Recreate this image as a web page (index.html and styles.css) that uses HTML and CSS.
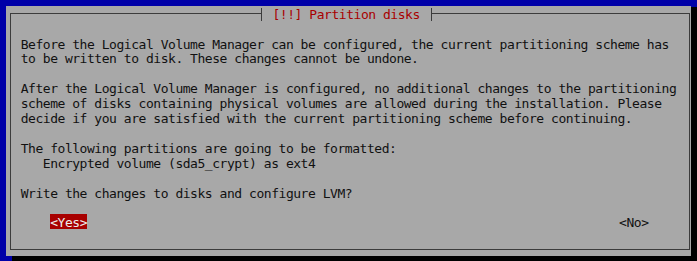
FILE: index.html
```html
<!DOCTYPE html>
<html>
<head>
<meta charset="utf-8">
<link rel="stylesheet" href="styles.css">
</head>
<body>
<div class="screen">
  <div class="dialog">
    <div class="frame">
      <div class="title">[!!] Partition disks</div>
      <div class="body">Before the Logical Volume Manager can be configured, the current partitioning scheme has
to be written to disk. These changes cannot be undone.

After the Logical Volume Manager is configured, no additional changes to the partitioning
scheme of disks containing physical volumes are allowed during the installation. Please
decide if you are satisfied with the current partitioning scheme before continuing.

The following partitions are going to be formatted:
   Encrypted volume (sda5_crypt) as ext4

Write the changes to disks and configure LVM?</div>
      <div class="buttons">
        <span class="btn btn-active">&lt;Yes&gt;</span>
        <span class="btn">&lt;No&gt;</span>
      </div>
    </div>
  </div>
</div>
</body>
</html>
```
FILE: styles.css
```css
html, body {
  margin: 0;
  padding: 0;
}
body {
  background: #0000a8;
  font-family: "DejaVu Sans Mono", "Liberation Mono", monospace;
  font-size: 13px;
  letter-spacing: -0.46px;
  color: #111;
}
.screen {
  width: 697px;
  height: 261px;
  overflow: hidden;
  background: #0000a8;
  padding: 6px 0 0 6px;
  box-sizing: border-box;
}
.dialog {
  width: 685px;
  height: 250px;
  box-sizing: border-box;
  background: #a8a8a8;
  padding: 7px 1px 6px 4px;
  display: flex;
  box-shadow: 6px 1px 0 #000, 6px 6px 0 #000;
}
.frame {
  flex: 1;
  position: relative;
  border: 1px solid #3c3c3c;
  display: flex;
  flex-direction: column;
}
.title {
  position: absolute;
  top: -6px;
  left: 250px;
  width: 171px;
  height: 13px;
  box-sizing: border-box;
  padding-left: 10.5px;
  line-height: 14px;
  background: #a8a8a8;
  border-left: 1px solid #3c3c3c;
  border-right: 1px solid #3c3c3c;
  color: #a80000;
  white-space: pre;
}
.body {
  white-space: pre;
  line-height: 14.9px;
  padding: 23.5px 0 0 9.7px;
}
.buttons {
  display: flex;
  justify-content: space-between;
  margin-top: 12.2px;
  padding: 0 40.5px 0 39.2px;
}
.btn {
  display: block;
  height: 15px;
  box-sizing: border-box;
  padding-top: 2px;
  line-height: 13px;
  white-space: pre;
}
.btn-active {
  background: #a80000;
  color: #eeeeee;
}
```
